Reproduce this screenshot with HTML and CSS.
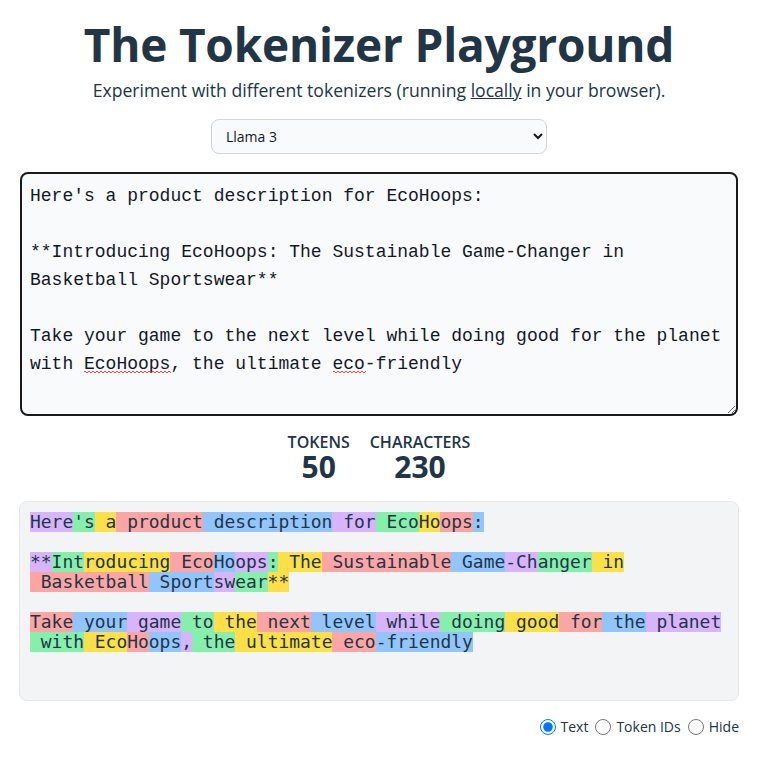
FILE: index.html
```html
<!DOCTYPE html>
<html lang="en">
<head>
<meta charset="utf-8">
<title>The Tokenizer Playground</title>
<link rel="stylesheet" href="styles.css">
</head>
<body>
<div class="page">
  <main class="app">
    <h1 class="title">The Tokenizer Playground</h1>
    <p class="subtitle">Experiment with different tokenizers (running <a class="link" href="#">locally</a> in your browser).</p>
    <div class="select-wrap">
      <select class="model-select">
        <option>Llama 3</option>
      </select>
    </div>
    <div class="editor">
      <textarea class="input" rows="8" spellcheck="false">Here's a product description for EcoHoops:

**Introducing EcoHoops: The Sustainable Game-Changer in Basketball Sportswear**

Take your game to the next level while doing good for the planet with EcoHoops, the ultimate eco-friendly</textarea>
      <svg class="squiggle squiggle-a" width="87" height="4" viewBox="0 0 87 4" aria-hidden="true">
        <defs>
          <pattern id="wave" width="4" height="4" patternUnits="userSpaceOnUse">
            <path d="M0 2 Q1 0.4 2 2 Q3 3.6 4 2" fill="none" stroke="#e0383e" stroke-width="1"/>
          </pattern>
        </defs>
        <rect width="87" height="4" fill="url(#wave)"/>
      </svg>
      <svg class="squiggle squiggle-b" width="33" height="4" viewBox="0 0 33 4" aria-hidden="true">
        <rect width="33" height="4" fill="url(#wave)"/>
      </svg>
    </div>
    <div class="stats">
      <div class="stat">
        <h2 class="stat-label">Tokens</h2>
        <h3 class="stat-value">50</h3>
      </div>
      <div class="stat">
        <h2 class="stat-label">Characters</h2>
        <h3 class="stat-value">230</h3>
      </div>
    </div>
    <div class="output"><span class="tok c0">Here</span><span class="tok c1">'s</span><span class="tok c2"> a</span><span class="tok c3"> product</span><span class="tok c4"> description</span><span class="tok c0"> for</span><span class="tok c1"> Eco</span><span class="tok c2">Ho</span><span class="tok c3">ops</span><span class="tok c4">:</span><br><br><span class="tok c0">**</span><span class="tok c1">Int</span><span class="tok c2">roducing</span><span class="tok c3"> Eco</span><span class="tok c4">Ho</span><span class="tok c0">ops</span><span class="tok c1">:</span><span class="tok c2"> The</span><span class="tok c3"> Sustainable</span><span class="tok c4"> Game</span><span class="tok c0">-Ch</span><span class="tok c1">anger</span><span class="tok c2"> in</span><span class="tok c3"> Basketball</span><span class="tok c4"> Sport</span><span class="tok c0">sw</span><span class="tok c1">ear</span><span class="tok c2">**</span><br><br><span class="tok c3">Take</span><span class="tok c4"> your</span><span class="tok c0"> game</span><span class="tok c1"> to</span><span class="tok c2"> the</span><span class="tok c3"> next</span><span class="tok c4"> level</span><span class="tok c0"> while</span><span class="tok c1"> doing</span><span class="tok c2"> good</span><span class="tok c3"> for</span><span class="tok c4"> the</span><span class="tok c0"> planet</span><span class="tok c1"> with</span><span class="tok c2"> Eco</span><span class="tok c3">Ho</span><span class="tok c4">ops</span><span class="tok c0">,</span><span class="tok c1"> the</span><span class="tok c2"> ultimate</span><span class="tok c3"> eco</span><span class="tok c4">-friendly</span></div>
    <div class="options">
      <label class="option"><input class="radio" type="radio" name="output" checked>Text</label>
      <label class="option"><input class="radio" type="radio" name="output">Token IDs</label>
      <label class="option"><input class="radio" type="radio" name="output">Hide</label>
    </div>
  </main>
</div>
</body>
</html>
```

FILE: styles.css
```css
* {
  box-sizing: border-box;
}

html,
body {
  margin: 0;
}

body {
  font-family: "Open Sans", "Noto Sans", sans-serif;
  color: #213547;
  background: #ffffff;
}

.page {
  width: 758px;
}

.app {
  width: 720px;
  margin: 0 auto;
  padding-top: 20px;
  display: flex;
  flex-direction: column;
  align-items: center;
}

.title {
  margin: 0 0 8px;
  font-size: 46px;
  line-height: 48px;
  font-weight: 700;
  letter-spacing: -0.2px;
  white-space: nowrap;
}

.subtitle {
  margin: 0;
  font-size: 17.6px;
  line-height: 28px;
}

.link {
  color: inherit;
  text-decoration: underline;
}

.select-wrap {
  margin-top: 15px;
  width: 336px;
}

.model-select {
  width: 100%;
  height: 35px;
  padding: 0 10px;
  font-family: "Open Sans", sans-serif;
  font-size: 14px;
  color: #111827;
  background-color: #f9fafb;
  border: 1px solid #d1d5db;
  border-radius: 8px;
}

.editor {
  position: relative;
  margin-top: 18px;
  width: 718px;
}

.input {
  display: block;
  width: 718px;
  height: 244px;
  padding: 8px;
  font-family: "Liberation Mono", monospace;
  font-size: 18px;
  line-height: 28px;
  color: #111827;
  background: #f9fafb;
  border: 2px solid #1a1a1a;
  border-radius: 8px;
  outline: none;
}

.squiggle {
  position: absolute;
  top: 198px;
  pointer-events: none;
}

.squiggle-a {
  left: 64px;
}

.squiggle-b {
  left: 313px;
}

.stats {
  margin-top: 17px;
  display: flex;
  justify-content: center;
  gap: 20px;
}

.stat {
  display: flex;
  flex-direction: column;
  align-items: center;
}

.stat-label {
  margin: 0;
  font-size: 16px;
  line-height: 18px;
  font-weight: 600;
  text-transform: uppercase;
}

.stat-value {
  margin: 0 0 2px;
  font-size: 30px;
  line-height: 32px;
  font-weight: 700;
}

.output {
  margin-top: 16px;
  width: 720px;
  height: 200px;
  padding: 10px;
  font-family: "DejaVu Sans Mono", monospace;
  font-size: 17.94px;
  line-height: 20px;
  color: #213547;
  text-align: left;
  background: #f3f4f6;
  border: 1px solid #e5e7eb;
  border-radius: 8px;
  overflow-y: auto;
}

.tok {
  display: inline-block;
  white-space: pre;
  line-height: 20px;
}

.c0 { background: #d8b4fe; }
.c1 { background: #86efac; }
.c2 { background: #fde047; }
.c3 { background: #fca5a5; }
.c4 { background: #93c5fd; }

.options {
  align-self: flex-end;
  margin-top: 18px;
  display: flex;
  gap: 7px;
}

.option {
  display: flex;
  align-items: center;
  gap: 5px;
  font-size: 14px;
  font-weight: 500;
  line-height: 16px;
}

.radio {
  margin: 0;
  width: 16px;
  height: 16px;
}
```
